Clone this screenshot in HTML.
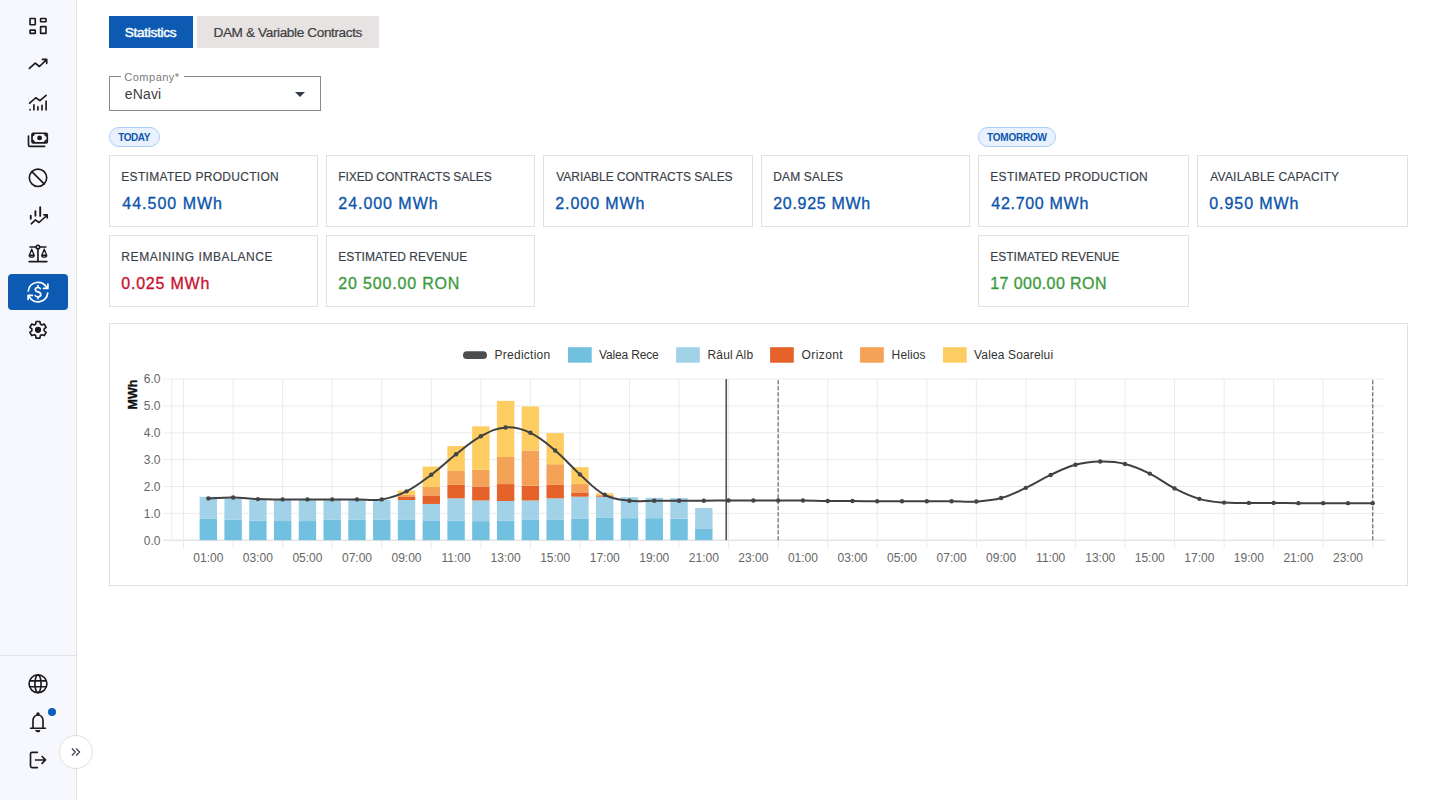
<!DOCTYPE html>
<html><head><meta charset="utf-8">
<style>
*{box-sizing:border-box;margin:0;padding:0}
html,body{width:1440px;height:800px;overflow:hidden;background:#fff;font-family:"Liberation Sans",sans-serif}
.abs{position:absolute}
.t{position:absolute;white-space:nowrap;line-height:1}
#sb{position:absolute;left:0;top:0;width:77px;height:800px;background:#f7f8fd;border-right:1px solid #e2e2e2}
#sbline{position:absolute;left:0;top:655px;width:76px;height:1px;background:#e2e2e2}
#act{position:absolute;left:8px;top:274px;width:60px;height:36px;background:#0d5ab3;border-radius:4px}
#collapse{position:absolute;left:59px;top:735px;width:34px;height:34px;border-radius:50%;background:#fff;border:1px solid #e0e0e0}
.tab{position:absolute;top:16px;height:32px}
.card{position:absolute;border:1px solid #e1e1e1;background:#fff}
.lbl{color:#383e47;font-size:12px;-webkit-text-stroke:0.15px currentColor}
.val{font-size:16px;-webkit-text-stroke:0.32px currentColor}
.pill{position:absolute;top:127px;height:20px;border-radius:10px;background:#e9f1fd;border:1px solid #a9ccfa}
.ptxt{color:#0e55ad;font-weight:bold;font-size:10px}
svg text{font-family:"Liberation Sans",sans-serif}
.yl,.xl{font-size:12px;fill:#666}
.yt{font-size:12.5px;font-weight:bold;fill:#111;stroke:#111;stroke-width:0.35px}
.lg{font-size:12px;fill:#333}
</style></head>
<body>
<div id="sb"></div>
<div id="sbline"></div>
<div id="act"></div>
<svg class="abs" style="left:0;top:0" width="77" height="800" viewBox="0 0 77 800" fill="none" stroke="#1a1a1c" stroke-width="1.65" stroke-linecap="round" stroke-linejoin="round">
 <!-- dashboard -->
 <rect x="30.05" y="18.5" width="5.2" height="6.25" rx="0.4"/>
 <rect x="40.6" y="18.5" width="5.4" height="3.2" rx="0.4"/>
 <rect x="30.05" y="30.05" width="5.2" height="3.3" rx="0.4"/>
 <rect x="40.6" y="26.6" width="5.4" height="6.75" rx="0.4"/>
 <!-- trending up -->
 <path d="M29.4 68.4 L35.25 63.1 L39.4 66.5 L46.6 59.6 M42.4 59.4 H46.7 V63.5"/>
 <!-- chart line bars -->
 <path d="M29.6 103.2 L35.8 97.75 L39.9 100.6 L46.1 95.3"/>
 <path d="M30 109.6 v0.3 M33.9 104.8 V110 M37.9 106.8 V110 M42 105.3 V110 M46.1 101 V110"/>
 <!-- money -->
 <rect x="32" y="133.2" width="15.3" height="9.7" rx="1.2"/>
 <circle cx="39.6" cy="137.9" r="1.6" fill="#1c1c1e"/>
 <path d="M28.5 136 V145 Q28.5 146.4 29.9 146.4 H44.6"/>
 <path d="M32.8 134.6 l1.6 0 l-1.6 1.6 z M45.9 134.6 l-1.6 0 l1.6 1.6 z M32.8 141.5 l1.6 0 l-1.6 -1.6 z M45.9 141.5 l-1.6 0 l1.6 -1.6 z" fill="#1c1c1e" stroke-width="1"/>
 <!-- ban -->
 <circle cx="38" cy="177.75" r="8.7"/>
 <path d="M31.9 171.6 L44.1 183.9"/>
 <!-- chart trend bars -->
 <path d="M30.75 215.6 V218.7 M35.4 211.3 V215.7 M40.2 207.3 V215.9" stroke-width="1.9"/>
 <path d="M31.3 223.8 L35.4 219.9 L39 222.5 L46.5 215.75 M43.9 214.8 H47.25 V218"/>
 <!-- scale -->
 <path d="M30 247 H36.2 M39.7 247 H45.9 M37.95 248.7 V261.4 M29.1 261.6 H46.9"/>
 <circle cx="37.95" cy="247" r="1.75"/>
 <path d="M31.7 249.2 L29.4 255 M31.7 249.2 L34 255 M44.25 249.2 L41.95 255 M44.25 249.2 L46.55 255" stroke-width="1.3"/>
 <path d="M29.3 255.2 H34.1 A2.4 1.9 0 0 1 29.3 255.2 Z M41.85 255.2 H46.65 A2.4 1.9 0 0 1 41.85 255.2 Z" stroke-width="1.4"/>
 <!-- exchange (white) -->
 <g stroke="#fff" stroke-width="1.7">
  <path d="M28.3 291 A9.8 9.8 0 0 1 46.6 287.4"/>
  <path d="M47.9 284.2 V288.3 H43.5"/>
  <path d="M47.7 293.2 A9.8 9.8 0 0 1 29.5 296.9"/>
  <path d="M28.1 299.4 V295.4 H32.4"/>
  <path d="M40.3 288.6 Q39.8 287.5 38 287.5 Q35.3 287.5 35.3 289.5 Q35.3 291.2 38 291.9 Q40.8 292.6 40.8 294.6 Q40.8 296.9 38 296.9 Q36 296.9 35.3 295.6 M38 285.6 V287.4 M38 297 V298.6"/>
 </g>
 <!-- gear -->
 <path d="M35.68 324.05 L36.09 321.52 L39.91 321.52 L40.32 324.05 L41.82 324.91 L44.22 324.00 L46.13 327.31 L44.14 328.94 L44.14 330.66 L46.13 332.29 L44.22 335.60 L41.82 334.69 L40.32 335.55 L39.91 338.08 L36.09 338.08 L35.68 335.55 L34.18 334.69 L31.78 335.60 L29.87 332.29 L31.86 330.66 L31.86 328.94 L29.87 327.31 L31.78 324.00 L34.18 324.91 Z"/>
 <circle cx="38" cy="329.8" r="2.3" fill="#1a1a1c"/>
 <!-- globe -->
 <circle cx="38" cy="683.8" r="8.9"/>
 <ellipse cx="38" cy="683.8" rx="3.1" ry="8.9"/>
 <path d="M30.3 680.8 H45.7 M30.3 686.7 H45.7"/>
 <!-- bell -->
 <path d="M30.6 728.2 H45.4 M33 727.6 V720.2 A5 5.2 0 0 1 43 720.2 V727.6"/>
 <circle cx="38" cy="714" r="0.9" fill="#1c1c1e"/>
 <path d="M36 730.6 H40 A2 1.3 0 0 1 36 730.6 Z" fill="#1c1c1e" stroke-width="1"/>
 <!-- logout -->
 <path d="M37.4 752.3 H32 Q30.5 752.3 30.5 753.8 V766.1 Q30.5 767.6 32 767.6 H37.4"/>
 <path d="M35.4 759.95 H45.4 M42.1 756.5 L45.5 759.95 L42.1 763.4"/>
</svg>
<div class="abs" style="left:48.1px;top:708px;width:7.9px;height:7.9px;border-radius:50%;background:#0f5db8"></div>
<div id="collapse"></div>
<svg class="abs" style="left:0;top:0" width="100" height="800" viewBox="0 0 100 800" fill="none" stroke="#4b5361" stroke-width="1.5" stroke-linecap="round" stroke-linejoin="round">
 <path d="M72.4 748.9 L75.3 752 L72.4 755.1 M76.6 748.9 L79.6 752 L76.6 755.1"/>
</svg>

<!-- tabs -->
<div class="tab" style="left:109px;width:84px;background:#0d5ab3"></div>
<div class="tab" style="left:197px;width:182px;background:#e6e3e2"></div>
<div class="t" style="left:124.8px;top:26.2px;font-size:13.6px;color:#fff;-webkit-text-stroke:0.45px #fff;letter-spacing:-0.3px">Statistics</div>
<div class="t" style="left:213.5px;top:26px;font-size:13.6px;color:#404040;-webkit-text-stroke:0.2px #404040;letter-spacing:-0.38px">DAM &amp; Variable Contracts</div>

<!-- select -->
<div class="abs" style="left:109px;top:76px;width:212px;height:35px;border:1px solid #8a8a8a"></div>
<div class="abs" style="left:121px;top:74px;width:63px;height:4px;background:#fff"></div>
<div class="t" style="left:124.3px;top:71.5px;font-size:11px;color:#7a7a7a;letter-spacing:0.5px">Company*</div>
<div class="t" style="left:124.8px;top:87.2px;font-size:14px;color:#404040;letter-spacing:0.15px">eNavi</div>
<svg class="abs" style="left:293px;top:90px" width="14" height="9"><path d="M2 2 H12 L7 7 Z" fill="#333b47"/></svg>

<!-- pills -->
<div class="pill" style="left:109px;width:51px"></div>
<div class="t ptxt" style="left:118.3px;top:132.6px;letter-spacing:-0.45px">TODAY</div>
<div class="pill" style="left:978px;width:78px"></div>
<div class="t ptxt" style="left:987px;top:132.6px;letter-spacing:-0.22px">TOMORROW</div>

<div class="card" style="left:109px;top:155px;width:209px;height:72px"></div>
<div class="t lbl" style="left:121.3px;top:171.4px;letter-spacing:0.3px">ESTIMATED PRODUCTION</div>
<div class="t val" style="left:122.3px;top:195.5px;color:#0b54ab;letter-spacing:1.0px">44.500 MWh</div>
<div class="card" style="left:326px;top:155px;width:209px;height:72px"></div>
<div class="t lbl" style="left:338.3px;top:171.4px;letter-spacing:-0.1px">FIXED CONTRACTS SALES</div>
<div class="t val" style="left:338.3px;top:195.5px;color:#0b54ab;letter-spacing:0.956px">24.000 MWh</div>
<div class="card" style="left:543px;top:155px;width:210px;height:72px"></div>
<div class="t lbl" style="left:556.3px;top:171.4px;letter-spacing:-0.065px">VARIABLE CONTRACTS SALES</div>
<div class="t val" style="left:555.3px;top:195.5px;color:#0b54ab;letter-spacing:0.925px">2.000 MWh</div>
<div class="card" style="left:761px;top:155px;width:209px;height:72px"></div>
<div class="t lbl" style="left:773.3px;top:171.4px;letter-spacing:0.137px">DAM SALES</div>
<div class="t val" style="left:773.3px;top:195.5px;color:#0b54ab;letter-spacing:0.678px">20.925 MWh</div>
<div class="card" style="left:978px;top:155px;width:211px;height:72px"></div>
<div class="t lbl" style="left:990.3px;top:171.4px;letter-spacing:0.3px">ESTIMATED PRODUCTION</div>
<div class="t val" style="left:991.3px;top:195.5px;color:#0b54ab;letter-spacing:0.7px">42.700 MWh</div>
<div class="card" style="left:1197px;top:155px;width:211px;height:72px"></div>
<div class="t lbl" style="left:1210.3px;top:171.4px;letter-spacing:0.194px">AVAILABLE CAPACITY</div>
<div class="t val" style="left:1209.3px;top:195.5px;color:#0b54ab;letter-spacing:0.925px">0.950 MWh</div>
<div class="card" style="left:109px;top:235px;width:209px;height:72px"></div>
<div class="t lbl" style="left:121.3px;top:251.4px;letter-spacing:0.583px">REMAINING IMBALANCE</div>
<div class="t val" style="left:121.3px;top:275.5px;color:#c8102e;letter-spacing:0.775px">0.025 MWh</div>
<div class="card" style="left:326px;top:235px;width:209px;height:72px"></div>
<div class="t lbl" style="left:338.3px;top:251.4px;letter-spacing:-0.013px">ESTIMATED REVENUE</div>
<div class="t val" style="left:338.3px;top:275.5px;color:#3c9a3c;letter-spacing:0.825px">20 500.00 RON</div>
<div class="card" style="left:978px;top:235px;width:211px;height:72px"></div>
<div class="t lbl" style="left:990.3px;top:251.4px;letter-spacing:-0.013px">ESTIMATED REVENUE</div>
<div class="t val" style="left:990.3px;top:275.5px;color:#3c9a3c;letter-spacing:0.417px">17 000.00 RON</div>

<!-- chart card -->
<div class="card" style="left:109px;top:323px;width:1299px;height:263px"></div>
<svg class="abs" style="left:0;top:0" width="1440" height="800" viewBox="0 0 1440 800">
<line x1="163.3" y1="540.20" x2="1385" y2="540.20" stroke="#d9d9d9" stroke-width="1"/>
<line x1="163.3" y1="513.35" x2="1385" y2="513.35" stroke="#ebebeb" stroke-width="1"/>
<line x1="163.3" y1="486.50" x2="1385" y2="486.50" stroke="#ebebeb" stroke-width="1"/>
<line x1="163.3" y1="459.65" x2="1385" y2="459.65" stroke="#ebebeb" stroke-width="1"/>
<line x1="163.3" y1="432.80" x2="1385" y2="432.80" stroke="#ebebeb" stroke-width="1"/>
<line x1="163.3" y1="405.95" x2="1385" y2="405.95" stroke="#ebebeb" stroke-width="1"/>
<line x1="163.3" y1="379.10" x2="1385" y2="379.10" stroke="#ebebeb" stroke-width="1"/>
<line x1="171.7" y1="379.10" x2="171.7" y2="540.20" stroke="#ebebeb" stroke-width="1"/>
<line x1="183.55" y1="379.10" x2="183.55" y2="548.2" stroke="#ebebeb" stroke-width="1"/>
<line x1="233.10" y1="379.10" x2="233.10" y2="548.2" stroke="#ebebeb" stroke-width="1"/>
<line x1="282.65" y1="379.10" x2="282.65" y2="548.2" stroke="#ebebeb" stroke-width="1"/>
<line x1="332.20" y1="379.10" x2="332.20" y2="548.2" stroke="#ebebeb" stroke-width="1"/>
<line x1="381.75" y1="379.10" x2="381.75" y2="548.2" stroke="#ebebeb" stroke-width="1"/>
<line x1="431.30" y1="379.10" x2="431.30" y2="548.2" stroke="#ebebeb" stroke-width="1"/>
<line x1="480.85" y1="379.10" x2="480.85" y2="548.2" stroke="#ebebeb" stroke-width="1"/>
<line x1="530.40" y1="379.10" x2="530.40" y2="548.2" stroke="#ebebeb" stroke-width="1"/>
<line x1="579.95" y1="379.10" x2="579.95" y2="548.2" stroke="#ebebeb" stroke-width="1"/>
<line x1="629.50" y1="379.10" x2="629.50" y2="548.2" stroke="#ebebeb" stroke-width="1"/>
<line x1="679.05" y1="379.10" x2="679.05" y2="548.2" stroke="#ebebeb" stroke-width="1"/>
<line x1="728.60" y1="379.10" x2="728.60" y2="548.2" stroke="#ebebeb" stroke-width="1"/>
<line x1="778.15" y1="379.10" x2="778.15" y2="548.2" stroke="#ebebeb" stroke-width="1"/>
<line x1="827.70" y1="379.10" x2="827.70" y2="548.2" stroke="#ebebeb" stroke-width="1"/>
<line x1="877.25" y1="379.10" x2="877.25" y2="548.2" stroke="#ebebeb" stroke-width="1"/>
<line x1="926.80" y1="379.10" x2="926.80" y2="548.2" stroke="#ebebeb" stroke-width="1"/>
<line x1="976.35" y1="379.10" x2="976.35" y2="548.2" stroke="#ebebeb" stroke-width="1"/>
<line x1="1025.90" y1="379.10" x2="1025.90" y2="548.2" stroke="#ebebeb" stroke-width="1"/>
<line x1="1075.45" y1="379.10" x2="1075.45" y2="548.2" stroke="#ebebeb" stroke-width="1"/>
<line x1="1125.00" y1="379.10" x2="1125.00" y2="548.2" stroke="#ebebeb" stroke-width="1"/>
<line x1="1174.55" y1="379.10" x2="1174.55" y2="548.2" stroke="#ebebeb" stroke-width="1"/>
<line x1="1224.10" y1="379.10" x2="1224.10" y2="548.2" stroke="#ebebeb" stroke-width="1"/>
<line x1="1273.65" y1="379.10" x2="1273.65" y2="548.2" stroke="#ebebeb" stroke-width="1"/>
<line x1="1323.20" y1="379.10" x2="1323.20" y2="548.2" stroke="#ebebeb" stroke-width="1"/>
<line x1="1372.75" y1="379.10" x2="1372.75" y2="548.2" stroke="#ebebeb" stroke-width="1"/>
<rect x="199.63" y="518.85" width="17.4" height="21.35" fill="#72c0df"/>
<rect x="199.63" y="496.81" width="17.4" height="22.04" fill="#a2d2e8"/>
<rect x="224.40" y="519.87" width="17.4" height="20.33" fill="#72c0df"/>
<rect x="224.40" y="498.69" width="17.4" height="21.18" fill="#a2d2e8"/>
<rect x="249.18" y="520.47" width="17.4" height="19.73" fill="#72c0df"/>
<rect x="249.18" y="500.03" width="17.4" height="20.43" fill="#a2d2e8"/>
<rect x="273.95" y="521.06" width="17.4" height="19.14" fill="#72c0df"/>
<rect x="273.95" y="500.03" width="17.4" height="21.02" fill="#a2d2e8"/>
<rect x="298.73" y="521.06" width="17.4" height="19.14" fill="#72c0df"/>
<rect x="298.73" y="500.03" width="17.4" height="21.02" fill="#a2d2e8"/>
<rect x="323.50" y="519.87" width="17.4" height="20.33" fill="#72c0df"/>
<rect x="323.50" y="500.03" width="17.4" height="19.84" fill="#a2d2e8"/>
<rect x="348.28" y="519.87" width="17.4" height="20.33" fill="#72c0df"/>
<rect x="348.28" y="500.03" width="17.4" height="19.84" fill="#a2d2e8"/>
<rect x="373.05" y="519.87" width="17.4" height="20.33" fill="#72c0df"/>
<rect x="373.05" y="500.03" width="17.4" height="19.84" fill="#a2d2e8"/>
<rect x="397.82" y="519.93" width="17.4" height="20.27" fill="#72c0df"/>
<rect x="397.82" y="500.01" width="17.4" height="19.92" fill="#a2d2e8"/>
<rect x="397.82" y="496.43" width="17.4" height="3.57" fill="#e5622b"/>
<rect x="397.82" y="494.82" width="17.4" height="1.61" fill="#f4a257"/>
<rect x="397.82" y="490.53" width="17.4" height="4.30" fill="#fecd62"/>
<rect x="422.60" y="520.33" width="17.4" height="19.87" fill="#72c0df"/>
<rect x="422.60" y="503.95" width="17.4" height="16.38" fill="#a2d2e8"/>
<rect x="422.60" y="495.36" width="17.4" height="8.59" fill="#e5622b"/>
<rect x="422.60" y="487.04" width="17.4" height="8.32" fill="#f4a257"/>
<rect x="422.60" y="466.63" width="17.4" height="20.41" fill="#fecd62"/>
<rect x="447.38" y="520.60" width="17.4" height="19.60" fill="#72c0df"/>
<rect x="447.38" y="498.31" width="17.4" height="22.29" fill="#a2d2e8"/>
<rect x="447.38" y="484.89" width="17.4" height="13.43" fill="#e5622b"/>
<rect x="447.38" y="470.93" width="17.4" height="13.96" fill="#f4a257"/>
<rect x="447.38" y="445.96" width="17.4" height="24.97" fill="#fecd62"/>
<rect x="472.15" y="521.14" width="17.4" height="19.06" fill="#72c0df"/>
<rect x="472.15" y="500.46" width="17.4" height="20.67" fill="#a2d2e8"/>
<rect x="472.15" y="486.50" width="17.4" height="13.96" fill="#e5622b"/>
<rect x="472.15" y="469.85" width="17.4" height="16.65" fill="#f4a257"/>
<rect x="472.15" y="426.36" width="17.4" height="43.50" fill="#fecd62"/>
<rect x="496.93" y="520.60" width="17.4" height="19.60" fill="#72c0df"/>
<rect x="496.93" y="501.00" width="17.4" height="19.60" fill="#a2d2e8"/>
<rect x="496.93" y="484.08" width="17.4" height="16.92" fill="#e5622b"/>
<rect x="496.93" y="456.97" width="17.4" height="27.12" fill="#f4a257"/>
<rect x="496.93" y="400.85" width="17.4" height="56.12" fill="#fecd62"/>
<rect x="521.70" y="519.93" width="17.4" height="20.27" fill="#72c0df"/>
<rect x="521.70" y="500.46" width="17.4" height="19.47" fill="#a2d2e8"/>
<rect x="521.70" y="485.69" width="17.4" height="14.77" fill="#e5622b"/>
<rect x="521.70" y="450.52" width="17.4" height="35.17" fill="#f4a257"/>
<rect x="521.70" y="406.49" width="17.4" height="44.03" fill="#fecd62"/>
<rect x="546.47" y="519.93" width="17.4" height="20.27" fill="#72c0df"/>
<rect x="546.47" y="498.31" width="17.4" height="21.61" fill="#a2d2e8"/>
<rect x="546.47" y="484.89" width="17.4" height="13.43" fill="#e5622b"/>
<rect x="546.47" y="464.21" width="17.4" height="20.67" fill="#f4a257"/>
<rect x="546.47" y="433.07" width="17.4" height="31.15" fill="#fecd62"/>
<rect x="571.25" y="518.45" width="17.4" height="21.75" fill="#72c0df"/>
<rect x="571.25" y="496.70" width="17.4" height="21.75" fill="#a2d2e8"/>
<rect x="571.25" y="492.41" width="17.4" height="4.30" fill="#e5622b"/>
<rect x="571.25" y="484.08" width="17.4" height="8.32" fill="#f4a257"/>
<rect x="571.25" y="467.17" width="17.4" height="16.92" fill="#fecd62"/>
<rect x="596.02" y="517.91" width="17.4" height="22.29" fill="#72c0df"/>
<rect x="596.02" y="496.70" width="17.4" height="21.21" fill="#a2d2e8"/>
<rect x="596.02" y="495.90" width="17.4" height="0.81" fill="#e5622b"/>
<rect x="596.02" y="494.82" width="17.4" height="1.07" fill="#f4a257"/>
<rect x="596.02" y="493.21" width="17.4" height="1.61" fill="#fecd62"/>
<rect x="620.80" y="518.18" width="17.4" height="22.02" fill="#72c0df"/>
<rect x="620.80" y="497.24" width="17.4" height="20.94" fill="#a2d2e8"/>
<rect x="645.57" y="518.18" width="17.4" height="22.02" fill="#72c0df"/>
<rect x="645.57" y="497.78" width="17.4" height="20.41" fill="#a2d2e8"/>
<rect x="670.35" y="518.72" width="17.4" height="21.48" fill="#72c0df"/>
<rect x="670.35" y="498.05" width="17.4" height="20.67" fill="#a2d2e8"/>
<rect x="695.12" y="528.92" width="17.4" height="11.28" fill="#72c0df"/>
<rect x="695.12" y="507.98" width="17.4" height="20.94" fill="#a2d2e8"/>
<line x1="726.25" y1="379.10" x2="726.25" y2="540.20" stroke="#4f4f4f" stroke-width="1.6"/>
<line x1="778.15" y1="379.10" x2="778.15" y2="540.20" stroke="#6a6a6a" stroke-width="1.2" stroke-dasharray="4 2" stroke-dashoffset="-1.2"/>
<line x1="1372.75" y1="379.10" x2="1372.75" y2="540.20" stroke="#6a6a6a" stroke-width="1.2" stroke-dasharray="4 2" stroke-dashoffset="-1.2"/>
<path d="M208.33,498.42 C218.24,498.06 223.20,497.37 233.10,497.51 C243.02,497.65 247.95,498.74 257.88,499.12 C267.77,499.50 272.74,499.33 282.65,499.39 C292.56,499.44 297.51,499.39 307.43,499.39 C317.33,499.39 322.29,499.39 332.20,499.39 C342.11,499.39 347.06,499.39 356.98,499.39 C366.88,499.39 372.09,500.96 381.75,499.39 C391.91,497.74 397.29,495.94 406.52,491.33 C417.11,486.06 421.75,481.83 431.30,474.69 C441.57,467.01 445.93,462.14 456.07,454.28 C465.75,446.78 470.19,442.07 480.85,436.29 C490.01,431.33 495.53,428.14 505.62,427.43 C515.35,426.74 521.40,428.60 530.40,432.80 C541.22,437.84 545.87,442.71 555.17,450.52 C565.69,459.35 569.69,465.25 579.95,474.42 C589.51,482.97 593.67,488.96 604.72,494.82 C613.49,499.48 619.45,499.53 629.50,500.73 C639.27,501.90 644.37,500.73 654.27,500.73 C664.18,500.73 669.14,500.73 679.05,500.73 C688.96,500.73 693.92,500.78 703.83,500.73 C713.74,500.68 718.69,500.52 728.60,500.46 C738.51,500.41 743.46,500.46 753.38,500.46 C763.28,500.46 768.24,500.46 778.15,500.46 C788.06,500.46 793.02,500.35 802.92,500.46 C812.84,500.57 817.79,500.89 827.70,501.00 C837.61,501.11 842.57,500.95 852.47,501.00 C862.39,501.05 867.34,501.21 877.25,501.27 C887.16,501.32 892.11,501.27 902.02,501.27 C911.93,501.27 916.89,501.27 926.80,501.27 C936.71,501.27 941.67,501.21 951.58,501.27 C961.49,501.32 966.49,502.18 976.35,501.54 C986.31,500.89 991.55,500.69 1001.12,498.05 C1011.37,495.21 1016.20,492.37 1025.90,487.84 C1036.02,483.13 1040.56,479.67 1050.67,474.95 C1060.38,470.43 1065.19,467.53 1075.45,464.75 C1085.01,462.16 1090.30,461.69 1100.22,461.53 C1110.12,461.37 1115.42,461.61 1125.00,463.95 C1135.24,466.44 1140.27,468.92 1149.77,473.61 C1160.09,478.70 1164.29,483.16 1174.55,488.38 C1184.11,493.25 1189.06,495.90 1199.33,498.85 C1208.88,501.60 1214.13,501.80 1224.10,502.61 C1233.95,503.41 1238.96,502.82 1248.88,502.88 C1258.78,502.93 1263.74,502.82 1273.65,502.88 C1283.56,502.93 1288.51,503.09 1298.42,503.15 C1308.33,503.20 1313.29,503.15 1323.20,503.15 C1333.11,503.15 1338.06,503.15 1347.97,503.15 C1357.88,503.15 1362.84,503.15 1372.75,503.15" fill="none" stroke="#404040" stroke-width="2"/>
<circle cx="208.33" cy="498.42" r="2.2" fill="#444"/>
<circle cx="233.10" cy="497.51" r="2.2" fill="#444"/>
<circle cx="257.88" cy="499.12" r="2.2" fill="#444"/>
<circle cx="282.65" cy="499.39" r="2.2" fill="#444"/>
<circle cx="307.43" cy="499.39" r="2.2" fill="#444"/>
<circle cx="332.20" cy="499.39" r="2.2" fill="#444"/>
<circle cx="356.98" cy="499.39" r="2.2" fill="#444"/>
<circle cx="381.75" cy="499.39" r="2.2" fill="#444"/>
<circle cx="406.52" cy="491.33" r="2.2" fill="#444"/>
<circle cx="431.30" cy="474.69" r="2.2" fill="#444"/>
<circle cx="456.07" cy="454.28" r="2.2" fill="#444"/>
<circle cx="480.85" cy="436.29" r="2.2" fill="#444"/>
<circle cx="505.62" cy="427.43" r="2.2" fill="#444"/>
<circle cx="530.40" cy="432.80" r="2.2" fill="#444"/>
<circle cx="555.17" cy="450.52" r="2.2" fill="#444"/>
<circle cx="579.95" cy="474.42" r="2.2" fill="#444"/>
<circle cx="604.72" cy="494.82" r="2.2" fill="#444"/>
<circle cx="629.50" cy="500.73" r="2.2" fill="#444"/>
<circle cx="654.27" cy="500.73" r="2.2" fill="#444"/>
<circle cx="679.05" cy="500.73" r="2.2" fill="#444"/>
<circle cx="703.83" cy="500.73" r="2.2" fill="#444"/>
<circle cx="728.60" cy="500.46" r="2.2" fill="#444"/>
<circle cx="753.38" cy="500.46" r="2.2" fill="#444"/>
<circle cx="778.15" cy="500.46" r="2.2" fill="#444"/>
<circle cx="802.92" cy="500.46" r="2.2" fill="#444"/>
<circle cx="827.70" cy="501.00" r="2.2" fill="#444"/>
<circle cx="852.47" cy="501.00" r="2.2" fill="#444"/>
<circle cx="877.25" cy="501.27" r="2.2" fill="#444"/>
<circle cx="902.02" cy="501.27" r="2.2" fill="#444"/>
<circle cx="926.80" cy="501.27" r="2.2" fill="#444"/>
<circle cx="951.58" cy="501.27" r="2.2" fill="#444"/>
<circle cx="976.35" cy="501.54" r="2.2" fill="#444"/>
<circle cx="1001.12" cy="498.05" r="2.2" fill="#444"/>
<circle cx="1025.90" cy="487.84" r="2.2" fill="#444"/>
<circle cx="1050.67" cy="474.95" r="2.2" fill="#444"/>
<circle cx="1075.45" cy="464.75" r="2.2" fill="#444"/>
<circle cx="1100.22" cy="461.53" r="2.2" fill="#444"/>
<circle cx="1125.00" cy="463.95" r="2.2" fill="#444"/>
<circle cx="1149.77" cy="473.61" r="2.2" fill="#444"/>
<circle cx="1174.55" cy="488.38" r="2.2" fill="#444"/>
<circle cx="1199.33" cy="498.85" r="2.2" fill="#444"/>
<circle cx="1224.10" cy="502.61" r="2.2" fill="#444"/>
<circle cx="1248.88" cy="502.88" r="2.2" fill="#444"/>
<circle cx="1273.65" cy="502.88" r="2.2" fill="#444"/>
<circle cx="1298.42" cy="503.15" r="2.2" fill="#444"/>
<circle cx="1323.20" cy="503.15" r="2.2" fill="#444"/>
<circle cx="1347.97" cy="503.15" r="2.2" fill="#444"/>
<circle cx="1372.75" cy="503.15" r="2.2" fill="#444"/>
<text x="160.5" y="544.50" text-anchor="end" class="yl">0.0</text>
<text x="160.5" y="517.65" text-anchor="end" class="yl">1.0</text>
<text x="160.5" y="490.80" text-anchor="end" class="yl">2.0</text>
<text x="160.5" y="463.95" text-anchor="end" class="yl">3.0</text>
<text x="160.5" y="437.10" text-anchor="end" class="yl">4.0</text>
<text x="160.5" y="410.25" text-anchor="end" class="yl">5.0</text>
<text x="160.5" y="383.40" text-anchor="end" class="yl">6.0</text>
<text x="208.33" y="562" text-anchor="middle" class="xl">01:00</text>
<text x="257.88" y="562" text-anchor="middle" class="xl">03:00</text>
<text x="307.43" y="562" text-anchor="middle" class="xl">05:00</text>
<text x="356.98" y="562" text-anchor="middle" class="xl">07:00</text>
<text x="406.52" y="562" text-anchor="middle" class="xl">09:00</text>
<text x="456.07" y="562" text-anchor="middle" class="xl">11:00</text>
<text x="505.62" y="562" text-anchor="middle" class="xl">13:00</text>
<text x="555.17" y="562" text-anchor="middle" class="xl">15:00</text>
<text x="604.72" y="562" text-anchor="middle" class="xl">17:00</text>
<text x="654.27" y="562" text-anchor="middle" class="xl">19:00</text>
<text x="703.83" y="562" text-anchor="middle" class="xl">21:00</text>
<text x="753.38" y="562" text-anchor="middle" class="xl">23:00</text>
<text x="802.92" y="562" text-anchor="middle" class="xl">01:00</text>
<text x="852.47" y="562" text-anchor="middle" class="xl">03:00</text>
<text x="902.02" y="562" text-anchor="middle" class="xl">05:00</text>
<text x="951.58" y="562" text-anchor="middle" class="xl">07:00</text>
<text x="1001.12" y="562" text-anchor="middle" class="xl">09:00</text>
<text x="1050.67" y="562" text-anchor="middle" class="xl">11:00</text>
<text x="1100.22" y="562" text-anchor="middle" class="xl">13:00</text>
<text x="1149.77" y="562" text-anchor="middle" class="xl">15:00</text>
<text x="1199.33" y="562" text-anchor="middle" class="xl">17:00</text>
<text x="1248.88" y="562" text-anchor="middle" class="xl">19:00</text>
<text x="1298.42" y="562" text-anchor="middle" class="xl">21:00</text>
<text x="1347.97" y="562" text-anchor="middle" class="xl">23:00</text>
<text transform="translate(136.5,394.5) rotate(-90)" text-anchor="middle" class="yt">MWh</text>
<rect x="463" y="351.3" width="24" height="7.7" rx="3.85" fill="#4d4d4d"/>
<text x="494.5" y="359" class="lg" letter-spacing="0.26">Prediction</text>
<rect x="568" y="347.2" width="23.7" height="15.5" fill="#72c0df"/>
<text x="599.1" y="359" class="lg" letter-spacing="-0.18">Valea Rece</text>
<rect x="676.1" y="347.2" width="23.7" height="15.5" fill="#a2d2e8"/>
<text x="707.6" y="359" class="lg" letter-spacing="0.11">Râul Alb</text>
<rect x="770.1" y="347.2" width="23.7" height="15.5" fill="#e5622b"/>
<text x="801.6" y="359" class="lg" letter-spacing="0.39">Orizont</text>
<rect x="860.1" y="347.2" width="23.7" height="15.5" fill="#f4a257"/>
<text x="891.6" y="359" class="lg" letter-spacing="0.13">Helios</text>
<rect x="943" y="347.2" width="23.7" height="15.5" fill="#fecd62"/>
<text x="974.1" y="359" class="lg" letter-spacing="0.14">Valea Soarelui</text>
</svg>
</body></html>
